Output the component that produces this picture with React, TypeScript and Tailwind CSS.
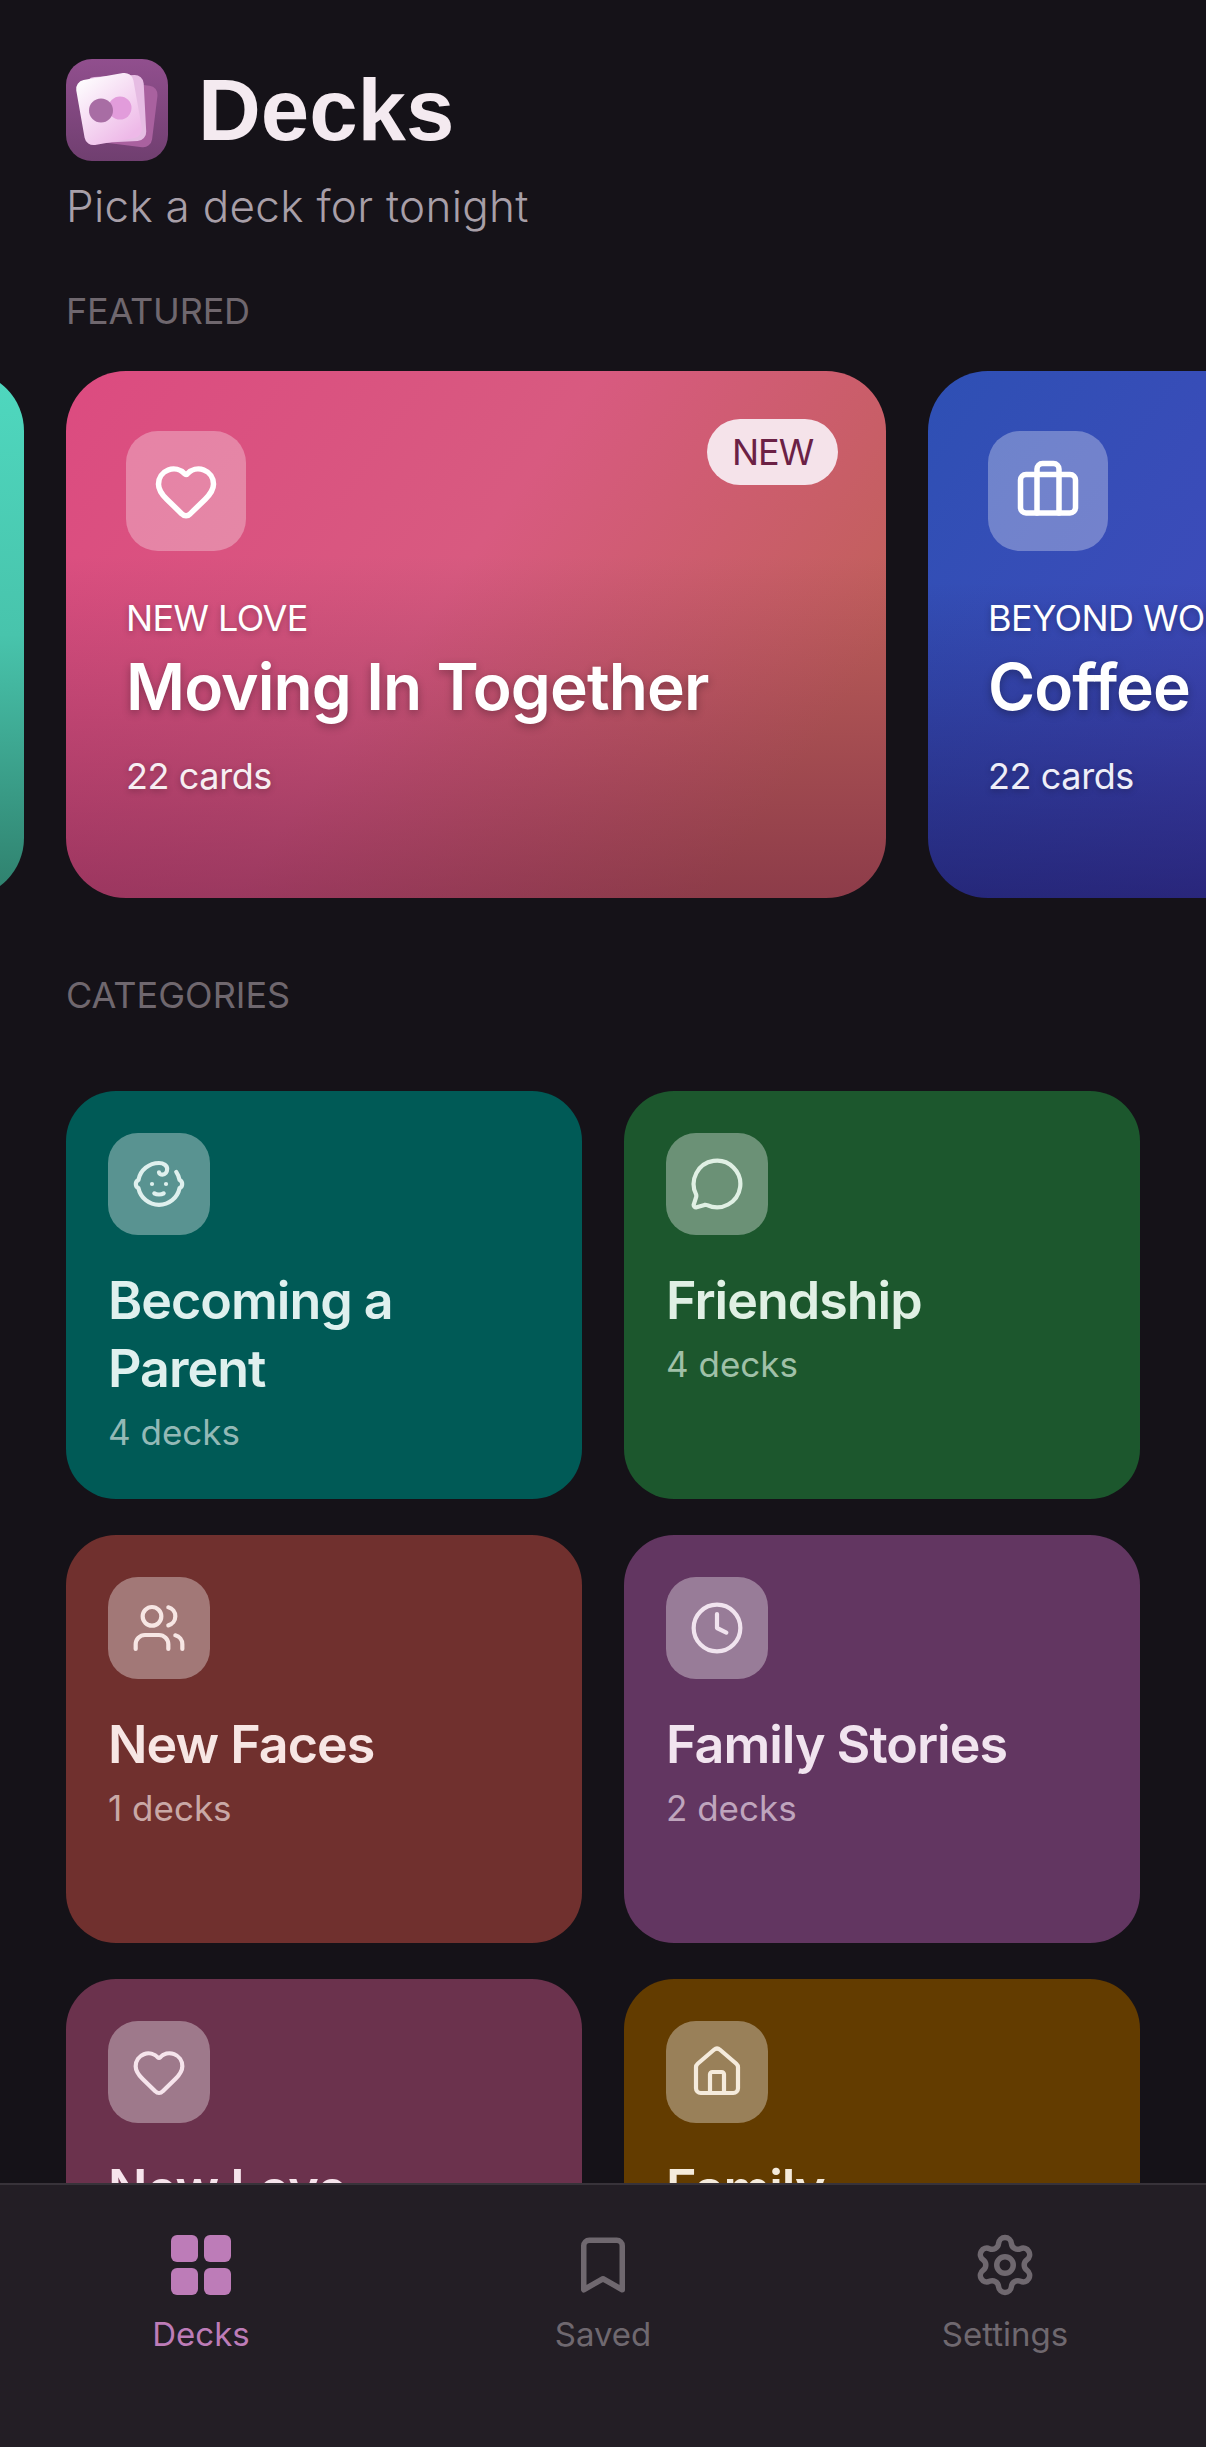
import { Baby, Bookmark, Briefcase, Clock, Heart, House, MessageCircle, Settings, Users } from "lucide-react"

const categories = [
  { name: "Becoming a Parent", count: "4 decks", icon: Baby, bg: "bg-[#005a56]", ink: "text-[#dff0ee]", sub: "text-[#93b9b6]" },
  { name: "Friendship", count: "4 decks", icon: MessageCircle, bg: "bg-[#1c572d]", ink: "text-[#e0f0e4]", sub: "text-[#a0c0a8]" },
  { name: "New Faces", count: "1 decks", icon: Users, bg: "bg-[#70302e]", ink: "text-[#f7e6e4]", sub: "text-[#c9a8a6]" },
  { name: "Family Stories", count: "2 decks", icon: Clock, bg: "bg-[#623661]", ink: "text-[#f1e4ef]", sub: "text-[#bfa5bd]" },
  { name: "New Love", count: "3 decks", icon: Heart, bg: "bg-[#6b324d]", ink: "text-[#f6e4ec]", sub: "text-[#c5a5b3]" },
  { name: "Family", count: "5 decks", icon: House, bg: "bg-[#633c00]", ink: "text-[#f5ebdc]", sub: "text-[#c4b094]" },
]

function Logo() {
  return (
    <svg viewBox="0 0 102 102" className="h-[102px] w-[102px] shrink-0">
      <defs>
        <linearGradient id="logoBg" x1="0" y1="0" x2="0" y2="1">
          <stop offset="0" stopColor="#914f8e" />
          <stop offset="1" stopColor="#703f70" />
        </linearGradient>
        <linearGradient id="logoCard" x1="0.2" y1="0" x2="0.7" y2="1">
          <stop offset="0" stopColor="#fdfafd" />
          <stop offset="1" stopColor="#eeb9e8" />
        </linearGradient>
      </defs>
      <rect width="102" height="102" rx="26" fill="url(#logoBg)" />
      <rect x="31" y="24" width="58" height="62" rx="9" fill="#a9619f" transform="rotate(7 60 55)" />
      <rect x="21" y="17" width="58" height="66" rx="9" fill="#e6bce3" transform="rotate(-3 50 50)" />
      <rect x="14" y="17" width="58" height="66" rx="9" fill="url(#logoCard)" transform="rotate(-10 43 50)" />
      <circle cx="54" cy="49" r="11.5" fill="#e29cdb" />
      <circle cx="35" cy="51.5" r="12" fill="#a86da4" />
    </svg>
  )
}

function FeaturedCard({ gradient, icon: Icon, tag, title, isNew, cardsInk }: {
  gradient: string
  icon: typeof Heart
  tag: string
  title: string
  isNew?: boolean
  cardsInk: string
}) {
  return (
    <div className={`relative h-[527px] w-[820px] shrink-0 rounded-[60px] pl-[60px] pt-[60px] ${gradient}`}>
      <div className="flex h-[120px] w-[120px] items-center justify-center rounded-[32px] bg-white/30">
        <Icon className="h-[66px] w-[66px] text-white" strokeWidth={2} />
      </div>
      {isNew && (
        <div className="absolute right-[48px] top-[48px] flex h-[66px] w-[131px] items-center justify-center rounded-full bg-[#f5e3ea] text-[36px] tracking-[-1px] text-[#6b2145]">
          NEW
        </div>
      )}
      <p className="mt-[45px] whitespace-nowrap text-[36px] leading-[44px] tracking-[-0.6px] text-white [text-shadow:0_2px_6px_rgba(0,0,0,0.25)]">{tag}</p>
      <p className="mt-[7px] whitespace-nowrap text-[64px] font-semibold leading-[80px] tracking-[-0.9px] text-white [text-shadow:0_3px_8px_rgba(0,0,0,0.3)]">{title}</p>
      <p className={`mt-[25px] text-[36px] leading-[48px] tracking-[-0.4px] [text-shadow:0_2px_6px_rgba(0,0,0,0.25)] ${cardsInk}`}>22 cards</p>
    </div>
  )
}

export default function App() {
  return (
    <div className="flex h-[2447px] w-[1206px] flex-col overflow-hidden bg-[#151218] font-['Inter',sans-serif]">
      <main className="min-h-0 flex-1 overflow-hidden pt-[59px]">
        <div className="flex items-center gap-[30px] px-[66px]">
          <Logo />
          <h1 className="font-['Liberation_Sans',sans-serif] text-[87px] font-bold leading-[102px] text-[#f4eaf0]">Decks</h1>
        </div>
        <p className="mt-[16px] px-[66px] text-[44px] font-light leading-[58px] tracking-[0.3px] text-[#a89fa8]">Pick a deck for tonight</p>
        <p className="mt-[54px] px-[66px] text-[36px] leading-[44px] tracking-[-0.2px] text-[#6f676e]">FEATURED</p>

        <div className="mt-[38px] flex gap-[42px] pl-[24px]">
          <div className="-ml-[820px] h-[527px] w-[820px] shrink-0 rounded-[60px] bg-[linear-gradient(180deg,#4fd8bf_0%,#48c4ac_50%,#2f7f6c_100%)]" />
          <FeaturedCard
            gradient="bg-[linear-gradient(180deg,rgba(70,10,50,0)_35%,rgba(70,10,50,0.42)_100%),linear-gradient(125deg,#dc4b80_0%,#d85a80_45%,#c0605a_85%)]"
            icon={Heart}
            tag="NEW LOVE"
            title="Moving In Together"
            cardsInk="text-[#f7eef2]"
            isNew
          />
          <FeaturedCard
            gradient="bg-[linear-gradient(180deg,rgba(20,10,70,0)_40%,rgba(20,10,70,0.55)_100%),linear-gradient(125deg,#2e50b4_0%,#4548bd_60%,#4a45c0_100%)]"
            icon={Briefcase}
            tag="BEYOND WORK"
            title="Coffee"
            cardsInk="text-[#eeeef8]"
          />
        </div>

        <p className="mt-[75px] px-[66px] text-[36px] leading-[44px] text-[#6f676e]">CATEGORIES</p>

        <div className="mt-[74px] grid grid-cols-[516px_516px] gap-x-[42px] gap-y-[36px] px-[66px]">
          {categories.map((cat) => (
            <div key={cat.name} className={`h-[408px] rounded-[50px] p-[42px] ${cat.bg}`}>
              <div className="flex h-[102px] w-[102px] items-center justify-center rounded-[30px] bg-white/35">
                <cat.icon className={`h-[56px] w-[56px] ${cat.ink}`} strokeWidth={1.8} />
              </div>
              <p className={`mt-[32px] text-[52px] font-semibold leading-[68px] tracking-[-1px] ${cat.ink}`}>{cat.name}</p>
              <p className={`mt-[6px] text-[35px] leading-[46px] ${cat.sub}`}>{cat.count}</p>
            </div>
          ))}
        </div>
      </main>

      <nav className="grid h-[264px] shrink-0 grid-cols-3 border-t-2 border-[#38333a] bg-[#231e25] pt-[47px]">
        <div className="flex flex-col items-center gap-[16px]">
          <div className="flex h-[66px] w-[66px] items-center justify-center">
            <div className="grid h-[60px] w-[60px] grid-cols-2 gap-[6px]">
              <span className="rounded-[6px] bg-[#bd7cb8]" />
              <span className="rounded-[6px] bg-[#bd7cb8]" />
              <span className="rounded-[6px] bg-[#bd7cb8]" />
              <span className="rounded-[6px] bg-[#bd7cb8]" />
            </div>
          </div>
          <span className="text-[33px] leading-[40px] text-[#bd7cb8]">Decks</span>
        </div>
        <div className="flex flex-col items-center gap-[16px]">
          <Bookmark className="h-[66px] w-[66px] text-[#6f686f]" strokeWidth={2} />
          <span className="text-[33px] leading-[40px] text-[#6f686f]">Saved</span>
        </div>
        <div className="flex flex-col items-center gap-[16px]">
          <Settings className="h-[66px] w-[66px] text-[#6f686f]" strokeWidth={2} />
          <span className="text-[33px] leading-[40px] text-[#6f686f]">Settings</span>
        </div>
      </nav>
    </div>
  )
}
